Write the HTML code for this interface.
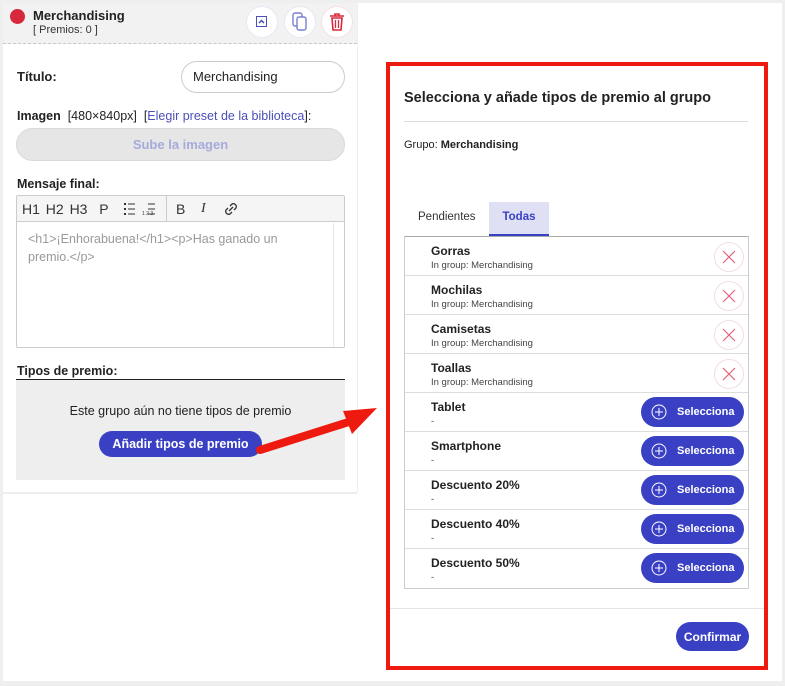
<!DOCTYPE html>
<html><head><meta charset="utf-8"><style>
*{box-sizing:border-box;margin:0;padding:0}
body{width:785px;height:686px;background:#efefef;font-family:"Liberation Sans",sans-serif;position:relative;overflow:hidden;color:#222}
.abs{position:absolute}
.bold{font-weight:bold}
.row{position:absolute;left:0;width:343px;height:39px;border-bottom:1px solid #ddd}
.row .t{position:absolute;left:26px;top:7px;font-size:12px;font-weight:bold;color:#222}
.row .s{position:absolute;left:26px;top:23px;font-size:9.5px;color:#444}
.x{position:absolute;right:4px;top:5px;width:30px;height:30px;border-radius:50%;border:1px solid #f3dde2;background:#fff}
.sel{position:absolute;right:4px;top:4px;width:103px;height:30px;border-radius:15px;background:#3a40c4;color:#fff;font-size:11px;font-weight:bold;white-space:nowrap}
.sel span{position:absolute;left:36px;top:9px}
.sel svg{position:absolute;left:10px;top:7px}
</style></head><body>
<div class="abs" style="left:3px;top:3px;width:779px;height:678px;background:#fff"></div>
<!-- left panel -->
<div class="abs" style="left:3px;top:3px;width:354px;height:41px;background:#f2f2f2;border-bottom:1px dashed #c8c8c8"></div>
<div class="abs" style="left:10px;top:9px;width:15px;height:15px;border-radius:50%;background:#d8283c"></div>
<div class="abs bold" style="left:33px;top:8px;font-size:13px">Merchandising</div>
<div class="abs" style="left:33px;top:24px;font-size:11px;color:#333">[ Premios: 0 ]</div>
<div class="abs" style="left:246px;top:6px;width:32px;height:32px;border-radius:50%;background:#fff;border:1px solid #e8e8f4"></div>
<div class="abs" style="left:256px;top:16px;width:11px;height:11px;border:1.5px solid #4a50b8"></div>
<svg class="abs" style="left:256px;top:16px" width="11" height="11"><path d="M3 7 L5.5 4.5 L8 7" stroke="#4a50b8" stroke-width="1.5" fill="none"/></svg>
<div class="abs" style="left:284px;top:6px;width:32px;height:32px;border-radius:50%;background:#fff;border:1px solid #e8e8f4"></div>
<svg class="abs" style="left:290px;top:11px" width="20" height="22"><rect x="3" y="2" width="9" height="13" rx="2" fill="none" stroke="#7a80d0" stroke-width="1.4"/><rect x="7" y="6" width="9" height="13" rx="2" fill="#fff" stroke="#7a80d0" stroke-width="1.4"/></svg>
<div class="abs" style="left:321px;top:6px;width:32px;height:32px;border-radius:50%;background:#fff;border:1px solid #f5e0e4"></div>
<svg class="abs" style="left:327px;top:11px" width="20" height="22"><path d="M3 5 H17 M8 5 V3 H12 V5" stroke="#d8283c" stroke-width="1.6" fill="none"/><path d="M5 7 H15 L14 19 H6 Z" stroke="#d8283c" stroke-width="1.6" fill="none"/><path d="M8.5 9 V17 M11.5 9 V17" stroke="#d8283c" stroke-width="1.3"/></svg>

<div class="abs bold" style="left:17px;top:69px;font-size:13px">Título:</div>
<div class="abs" style="left:181px;top:61px;width:164px;height:32px;border:1px solid #ccc;border-radius:16px;font-size:13px;padding:7px 0 0 11px">Merchandising</div>
<div class="abs" style="left:17px;top:109px;font-size:12.5px"><b>Imagen</b>&nbsp; [480×840px] &nbsp;[<span style="color:#4a50b8">Elegir preset de la biblioteca</span>]:</div>
<div class="abs" style="left:16px;top:128px;width:329px;height:33px;border-radius:17px;background:#e6e6e6;border:1px solid #d8d8d8;color:#a7aadc;font-size:13px;font-weight:bold;text-align:center;padding-top:8px">Sube la imagen</div>
<div class="abs bold" style="left:17px;top:177px;font-size:12.5px">Mensaje final:</div>
<div class="abs" style="left:16px;top:195px;width:329px;height:153px;border:1px solid #ccc;border-radius:2px"></div>
<div class="abs" style="left:17px;top:196px;width:327px;height:26px;background:#f5f5f5;border-bottom:1px solid #ccc"></div>
<div class="abs" style="left:166px;top:196px;width:1px;height:26px;background:#ccc"></div>
<div class="abs" style="left:22px;top:201px;font-size:14px;color:#333;word-spacing:2px">H1 H2 H3 &nbsp;P</div>
<svg class="abs" style="left:122px;top:201px" width="40" height="16"><g fill="#333"><rect x="2" y="2" width="2" height="2"/><rect x="2" y="7" width="2" height="2"/><rect x="2" y="12" width="2" height="2"/><rect x="6" y="2.5" width="7" height="1"/><rect x="6" y="7.5" width="7" height="1"/><rect x="6" y="12.5" width="7" height="1"/><rect x="26" y="2.5" width="7" height="1"/><rect x="26" y="7.5" width="7" height="1"/><rect x="26" y="12.5" width="7" height="1"/></g><text x="20" y="14" font-size="5" fill="#333" font-family="Liberation Sans">1 2 3</text></svg>
<div class="abs" style="left:176px;top:201px;font-size:14px;color:#333">B</div>
<div class="abs" style="left:201px;top:201px;font-size:14px;font-style:italic;font-family:'Liberation Serif',serif;color:#333">I</div>
<svg class="abs" style="left:222px;top:200px" width="18" height="18"><path d="M7 11 L11 7" stroke="#333" stroke-width="1.3"/><path d="M8 6 L10 4 A3 3 0 0 1 14 8 L12 10 M10 12 L8 14 A3 3 0 0 1 4 10 L6 8" stroke="#333" stroke-width="1.3" fill="none"/></svg>
<div class="abs" style="left:28px;top:230px;width:290px;font-size:12.5px;color:#999;line-height:18px">&lt;h1&gt;¡Enhorabuena!&lt;/h1&gt;&lt;p&gt;Has ganado un premio.&lt;/p&gt;</div>
<div class="abs" style="left:333px;top:223px;width:1px;height:124px;background:#e8e8e8"></div>
<div class="abs bold" style="left:17px;top:364px;font-size:12.5px">Tipos de premio:</div>
<div class="abs" style="left:16px;top:379px;width:329px;height:1px;background:#222"></div>
<div class="abs" style="left:16px;top:380px;width:329px;height:100px;background:#eeeeee"></div>
<div class="abs" style="left:16px;top:404px;width:329px;text-align:center;font-size:12.5px">Este grupo aún no tiene tipos de premio</div>
<div class="abs bold" style="left:99px;top:431px;width:163px;height:26px;border-radius:13px;background:#3a40c4;color:#fff;font-size:12.5px;text-align:center;padding-top:6px">Añadir tipos de premio</div>
<div class="abs" style="left:3px;top:492px;width:354px;height:2px;background:#eee"></div>
<div class="abs" style="left:357px;top:3px;width:1px;height:490px;background:#eee"></div>

<!-- modal -->
<div class="abs" style="left:386px;top:62px;width:382px;height:608px;border:4px solid #ee1a10;background:#fff"></div>
<div class="abs bold" style="left:404px;top:90px;font-size:14.5px">Selecciona y añade tipos de premio al grupo</div>
<div class="abs" style="left:404px;top:121px;width:344px;height:1px;background:#ddd"></div>
<div class="abs" style="left:404px;top:139px;font-size:11px">Grupo: <b>Merchandising</b></div>
<div class="abs" style="left:418px;top:211px;font-size:11.5px;color:#333">Pendientes</div>
<div class="abs bold" style="left:489px;top:202px;width:60px;height:34px;background:#e0e0f4;border-bottom:2px solid #3a40c4;color:#3a40c4;font-size:11.5px;text-align:center;padding-top:9px">Todas</div>
<div class="abs" style="left:404px;top:236px;width:345px;height:353px;border:1px solid #ccc;border-top:1px solid #aaa">
 <div class="row" style="top:0"><div class="t">Gorras</div><div class="s">In group: Merchandising</div><div class="x"><svg width="28" height="28"><path d="M8 8 L20 20 M20 8 L8 20" stroke="#e0607a" stroke-width="1.2"/></svg></div></div>
 <div class="row" style="top:39px"><div class="t">Mochilas</div><div class="s">In group: Merchandising</div><div class="x"><svg width="28" height="28"><path d="M8 8 L20 20 M20 8 L8 20" stroke="#e0607a" stroke-width="1.2"/></svg></div></div>
 <div class="row" style="top:78px"><div class="t">Camisetas</div><div class="s">In group: Merchandising</div><div class="x"><svg width="28" height="28"><path d="M8 8 L20 20 M20 8 L8 20" stroke="#e0607a" stroke-width="1.2"/></svg></div></div>
 <div class="row" style="top:117px"><div class="t">Toallas</div><div class="s">In group: Merchandising</div><div class="x"><svg width="28" height="28"><path d="M8 8 L20 20 M20 8 L8 20" stroke="#e0607a" stroke-width="1.2"/></svg></div></div>
 <div class="row" style="top:156px"><div class="t">Tablet</div><div class="s">-</div><div class="sel"><svg width="16" height="16"><circle cx="8" cy="8" r="7" stroke="#fff" fill="none"/><path d="M8 4V12M4 8H12" stroke="#fff"/></svg><span>Selecciona</span></div></div>
 <div class="row" style="top:195px"><div class="t">Smartphone</div><div class="s">-</div><div class="sel"><svg width="16" height="16"><circle cx="8" cy="8" r="7" stroke="#fff" fill="none"/><path d="M8 4V12M4 8H12" stroke="#fff"/></svg><span>Selecciona</span></div></div>
 <div class="row" style="top:234px"><div class="t">Descuento 20%</div><div class="s">-</div><div class="sel"><svg width="16" height="16"><circle cx="8" cy="8" r="7" stroke="#fff" fill="none"/><path d="M8 4V12M4 8H12" stroke="#fff"/></svg><span>Selecciona</span></div></div>
 <div class="row" style="top:273px"><div class="t">Descuento 40%</div><div class="s">-</div><div class="sel"><svg width="16" height="16"><circle cx="8" cy="8" r="7" stroke="#fff" fill="none"/><path d="M8 4V12M4 8H12" stroke="#fff"/></svg><span>Selecciona</span></div></div>
 <div class="row" style="top:312px;border-bottom:none"><div class="t">Descuento 50%</div><div class="s">-</div><div class="sel"><svg width="16" height="16"><circle cx="8" cy="8" r="7" stroke="#fff" fill="none"/><path d="M8 4V12M4 8H12" stroke="#fff"/></svg><span>Selecciona</span></div></div>
</div>
<div class="abs" style="left:390px;top:608px;width:374px;height:1px;background:#e6e6e6"></div>
<div class="abs bold" style="left:676px;top:622px;width:73px;height:29px;border-radius:15px;background:#3a40c4;color:#fff;font-size:12px;text-align:center;padding-top:8px">Confirmar</div>

<!-- arrow -->
<svg class="abs" style="left:0;top:0" width="785" height="686"><path d="M260 450 L355 420" stroke="#ee1a10" stroke-width="8" stroke-linecap="round"/><polygon points="377,408 343,411 352,434" fill="#ee1a10"/></svg>
</body></html>
